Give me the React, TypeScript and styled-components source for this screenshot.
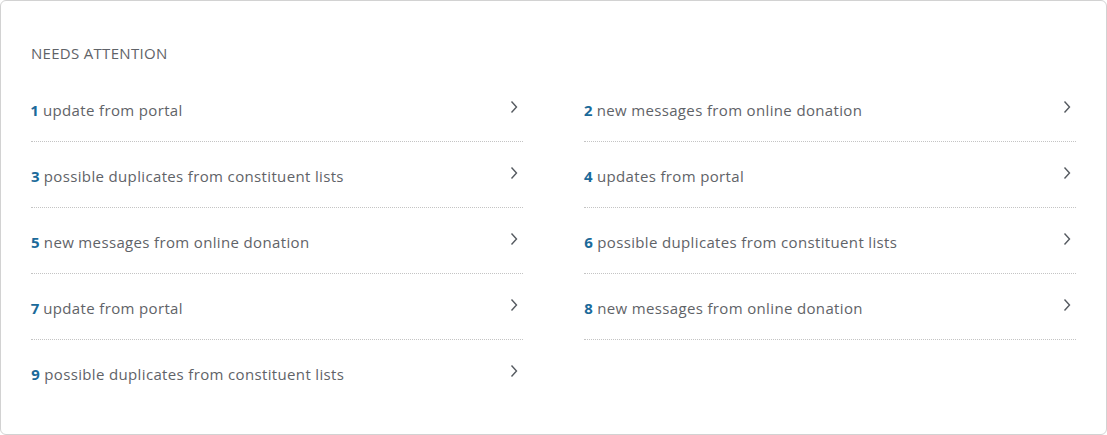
import React from "react";
import styled, { createGlobalStyle } from "styled-components";

const Global = createGlobalStyle`
  html, body { margin: 0; padding: 0; background: #ffffff; }
  body { font-family: "Open Sans", "Liberation Sans", sans-serif; }
`;

const Card = styled.section`
  box-sizing: border-box;
  width: 1107px;
  height: 435px;
  border: 1px solid #d2d2d2;
  border-radius: 6px;
  background: #fff;
  padding: 42px 30px 0 30px;
`;

const Heading = styled.h2`
  margin: 0 0 13px 0;
  font-size: 15px;
  line-height: 20px;
  letter-spacing: 0.3px;
  font-weight: 400;
  color: #5f6368;
  text-transform: uppercase;
`;

const List = styled.ul`
  list-style: none;
  margin: 0;
  padding: 0;
  display: grid;
  grid-template-columns: 1fr 1fr;
  column-gap: 61px;
`;

const Row = styled.li<{ $last?: boolean }>`
  display: flex;
  align-items: center;
  justify-content: space-between;
  height: 65px;
  border-bottom: 1px ${(p) => (p.$last ? "solid transparent" : "dotted #c4c4c4")};
  cursor: pointer;
`;

const Label = styled.span`
  font-size: 15px;
  line-height: 20px;
  letter-spacing: 0.35px;
  color: #5f6368;
  margin-top: 2px;
`;

const Count = styled.b`
  font-weight: 700;
  color: #1b6a9a;
  letter-spacing: 0;
  font-variant-numeric: proportional-nums;
  font-feature-settings: "pnum" 1;
`;

const Chevron = styled.svg`
  width: 14px;
  height: 14px;
  margin-right: 2px;
  margin-bottom: 4px;
  flex: none;
`;

const items: [number, string][] = [
  [1, "update from portal"],
  [2, "new messages from online donation"],
  [3, "possible duplicates from constituent lists"],
  [4, "updates from portal"],
  [5, "new messages from online donation"],
  [6, "possible duplicates from constituent lists"],
  [7, "update from portal"],
  [8, "new messages from online donation"],
  [9, "possible duplicates from constituent lists"],
];

export default function App() {
  return (
    <>
      <Global />
      <Card>
        <Heading>Needs attention</Heading>
        <List>
          {items.map(([n, text], i) => (
            <Row key={n} $last={i === items.length - 1}>
              <Label>
                <Count>{n}</Count> {text}
              </Label>
              <Chevron viewBox="0 0 14 14" aria-hidden="true">
                <path
                  d="M4.5 1.5 L9.5 7 L4.5 12.5"
                  fill="none"
                  stroke="#555a60"
                  strokeWidth="1.4"
                />
              </Chevron>
            </Row>
          ))}
        </List>
      </Card>
    </>
  );
}
